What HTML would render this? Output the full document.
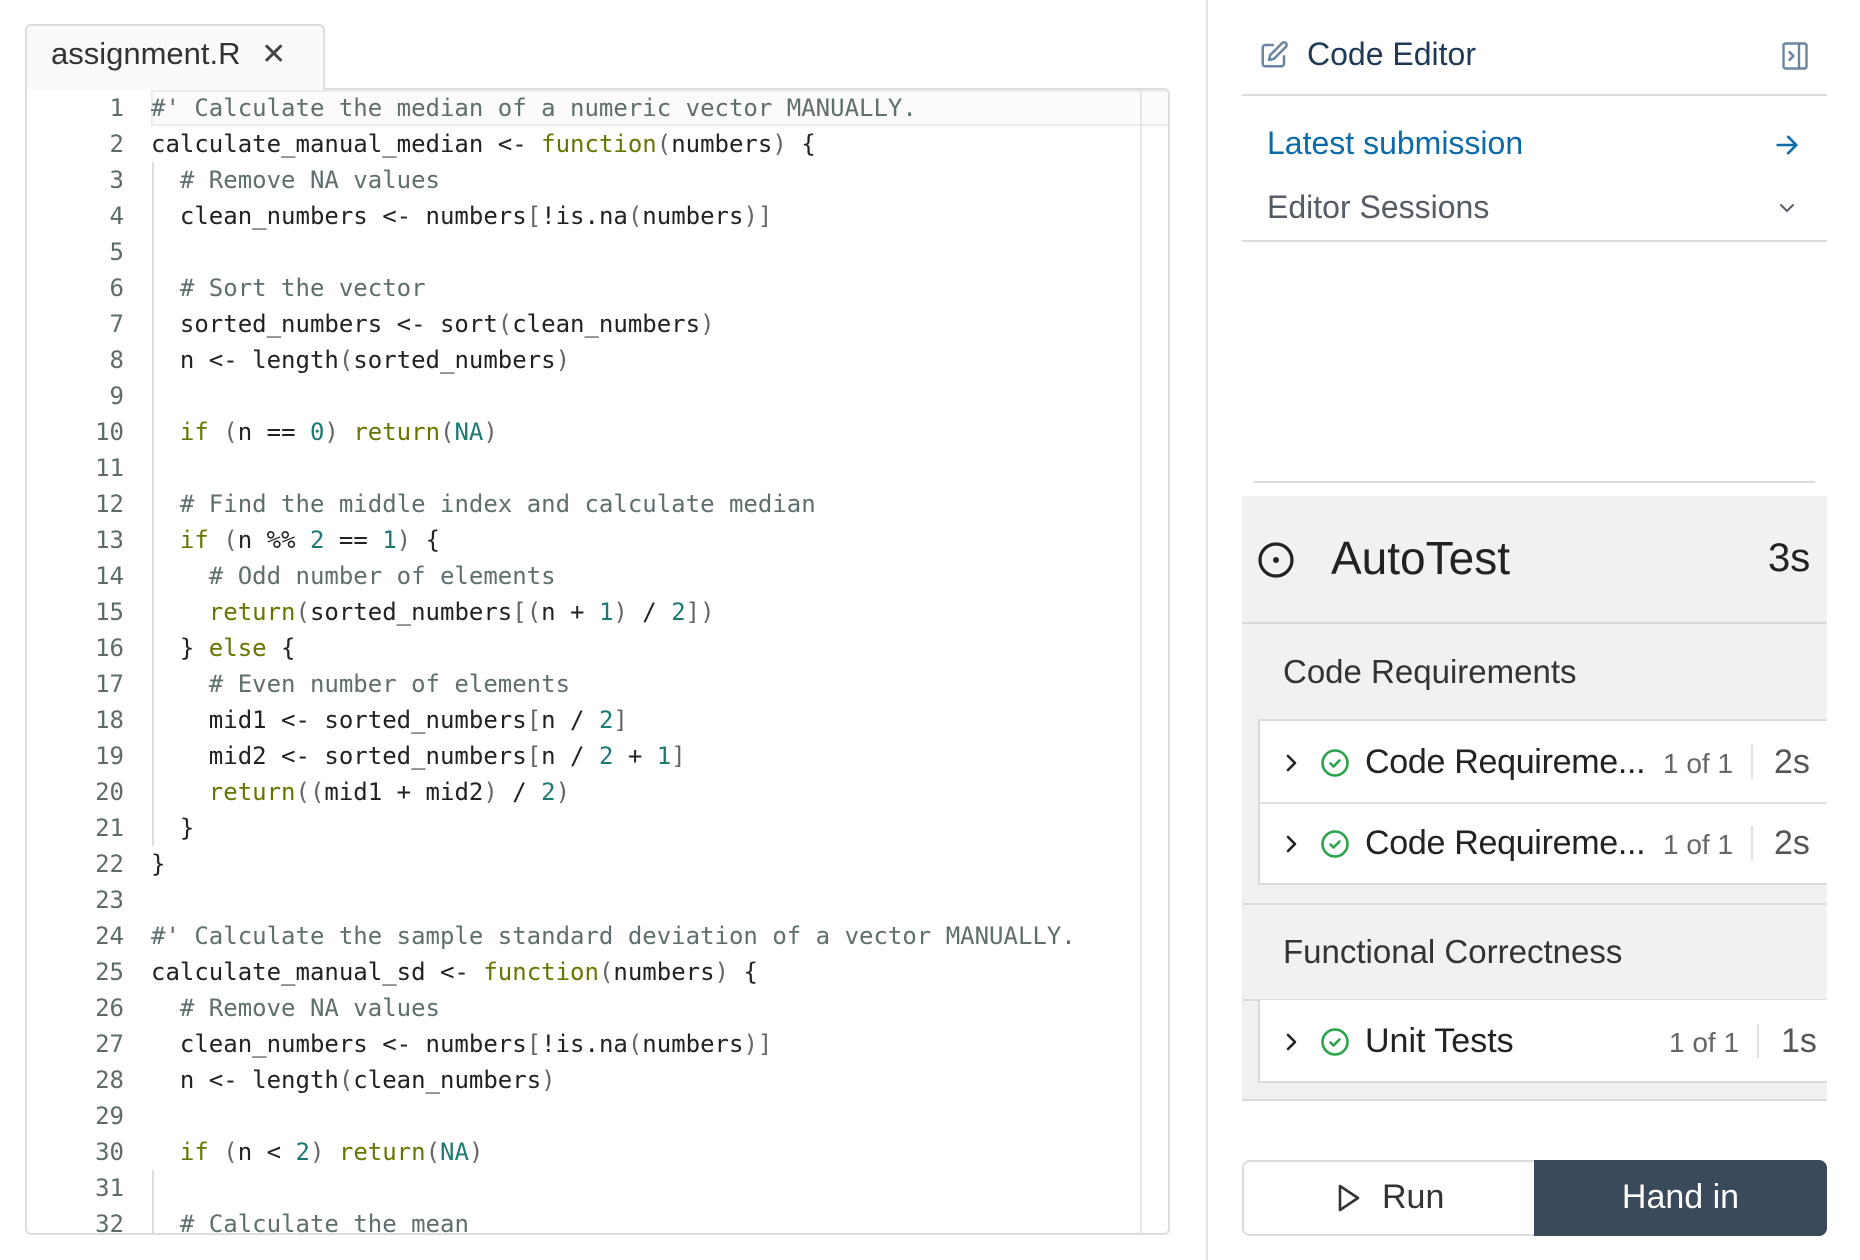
<!DOCTYPE html>
<html><head><meta charset="utf-8"><style>
*{margin:0;padding:0;box-sizing:border-box}
html,body{width:1860px;height:1260px;overflow:hidden}
body{background:#fff;position:relative;font-family:"Liberation Sans",sans-serif}
.abs{position:absolute}
.tab{left:25px;top:24px;width:300px;height:66px;border:2px solid #ddd;border-bottom:none;border-radius:6px 6px 0 0;background:#fafafa;font-size:31px;color:#333;padding:10px 0 0 24px;z-index:2}
.editor{left:25px;top:88px;width:1145px;height:1147px;border:2px solid #ddd;border-radius:0 6px 6px 6px;overflow:hidden;background:#fff}
.code{position:absolute;left:0;top:0;font-family:"DejaVu Sans Mono","Liberation Mono",monospace;font-size:24px;line-height:36px;white-space:pre;color:#222}
.ln{position:absolute;left:0;top:0;width:97px;text-align:right;font-family:"DejaVu Sans Mono","Liberation Mono",monospace;font-size:24px;line-height:36px;color:#5e6b6b;white-space:pre}
.c{color:#5f6e6e}.k{color:#687500}.n{color:#1c7a72}.p{color:#666}
.guide{position:absolute;width:2px;background:#ddd}
.r{font-family:"Liberation Sans",sans-serif}
</style></head><body>
<div class="abs tab">assignment.R <span style="margin-left:12px;font-size:30px;font-weight:300;color:#444">✕</span></div>
<div class="abs editor">
  <div class="abs" style="left:124px;top:0;width:1044px;height:36px;border:2px solid #ececec;background:#fbfbfb"></div>
  <div class="abs" style="left:1113px;top:0;width:2px;height:1145px;background:#e6e6e6"></div>
  <div class="guide" style="left:125px;top:72px;height:684px"></div>
  <div class="guide" style="left:125px;top:1152px;height:-4px"></div>
  <div class="guide" style="left:125px;top:1080px;height:63px"></div>
  <div class="ln">1
2
3
4
5
6
7
8
9
10
11
12
13
14
15
16
17
18
19
20
21
22
23
24
25
26
27
28
29
30
31
32</div>
  <div class="code" style="left:124px"><span class="c">#' Calculate the median of a numeric vector MANUALLY.</span>
calculate_manual_median &lt;- <span class="k">function</span><span class="p">(</span>numbers<span class="p">)</span> {
  <span class="c"># Remove NA values</span>
  clean_numbers &lt;- numbers<span class="p">[</span>!is.na<span class="p">(</span>numbers<span class="p">)]</span>

  <span class="c"># Sort the vector</span>
  sorted_numbers &lt;- sort<span class="p">(</span>clean_numbers<span class="p">)</span>
  n &lt;- length<span class="p">(</span>sorted_numbers<span class="p">)</span>

  <span class="k">if</span> <span class="p">(</span>n == <span class="n">0</span><span class="p">)</span> <span class="k">return</span><span class="p">(</span><span class="n">NA</span><span class="p">)</span>

  <span class="c"># Find the middle index and calculate median</span>
  <span class="k">if</span> <span class="p">(</span>n %% <span class="n">2</span> == <span class="n">1</span><span class="p">)</span> {
    <span class="c"># Odd number of elements</span>
    <span class="k">return</span><span class="p">(</span>sorted_numbers<span class="p">[(</span>n + <span class="n">1</span><span class="p">)</span> / <span class="n">2</span><span class="p">])</span>
  } <span class="k">else</span> {
    <span class="c"># Even number of elements</span>
    mid1 &lt;- sorted_numbers<span class="p">[</span>n / <span class="n">2</span><span class="p">]</span>
    mid2 &lt;- sorted_numbers<span class="p">[</span>n / <span class="n">2</span> + <span class="n">1</span><span class="p">]</span>
    <span class="k">return</span><span class="p">((</span>mid1 + mid2<span class="p">)</span> / <span class="n">2</span><span class="p">)</span>
  }
}

<span class="c">#' Calculate the sample standard deviation of a vector MANUALLY.</span>
calculate_manual_sd &lt;- <span class="k">function</span><span class="p">(</span>numbers<span class="p">)</span> {
  <span class="c"># Remove NA values</span>
  clean_numbers &lt;- numbers<span class="p">[</span>!is.na<span class="p">(</span>numbers<span class="p">)]</span>
  n &lt;- length<span class="p">(</span>clean_numbers<span class="p">)</span>

  <span class="k">if</span> <span class="p">(</span>n &lt; <span class="n">2</span><span class="p">)</span> <span class="k">return</span><span class="p">(</span><span class="n">NA</span><span class="p">)</span>

  <span class="c"># Calculate the mean</span></div>
</div>
<div class="abs" style="left:1206px;top:0;width:2px;height:1260px;background:#e4e4e4"></div>

<svg class="abs" style="left:1259px;top:40px" width="30" height="30" viewBox="0 0 24 24" fill="none" stroke="#6a85a0" stroke-width="2" stroke-linecap="round" stroke-linejoin="round"><path d="M11 4H5a2 2 0 0 0-2 2v13a2 2 0 0 0 2 2h13a2 2 0 0 0 2-2v-6"/><path d="M18.5 2.5a2.1 2.1 0 0 1 3 3L12 15l-4 1 1-4z"/></svg>
<div class="abs r" style="left:1307px;top:36px;font-size:32px;color:#1f3a56">Code Editor</div>
<svg class="abs" style="left:1782px;top:42px" width="26" height="28" viewBox="0 0 26 28" fill="none" stroke="#6a85a0" stroke-width="2.4"><rect x="1.5" y="1.5" width="23" height="25" rx="2"/><path d="M17 2v24"/><path d="M7.5 10l4 4-4 4" stroke-linecap="round" stroke-linejoin="round"/></svg>
<div class="abs" style="left:1242px;top:94px;width:585px;height:2px;background:#dcdcdc"></div>
<div class="abs r" style="left:1267px;top:125px;font-size:32px;color:#0b6aa8">Latest submission</div>
<svg class="abs" style="left:1773px;top:131px" width="28" height="28" viewBox="0 0 24 24" fill="none" stroke="#0b6aa8" stroke-width="2.2" stroke-linecap="round" stroke-linejoin="round"><path d="M4 12h16M13 5l7 7-7 7"/></svg>
<div class="abs r" style="left:1267px;top:189px;font-size:32px;color:#555c64">Editor Sessions</div>
<svg class="abs" style="left:1775px;top:196px" width="24" height="24" viewBox="0 0 24 24" fill="none" stroke="#555c64" stroke-width="2" stroke-linecap="round"><path d="M6 9l6 6 6-6"/></svg>
<div class="abs" style="left:1242px;top:240px;width:585px;height:2px;background:#dcdcdc"></div>
<div class="abs" style="left:1254px;top:481px;width:561px;height:2px;background:#dcdcdc"></div>

<div class="abs" style="left:1242px;top:496px;width:585px;height:605px;background:#f1f1f1;border-bottom:2px solid #dadada"></div>
<svg class="abs" style="left:1257px;top:541px" width="38" height="38" viewBox="0 0 38 38" fill="none" stroke="#222" stroke-width="3.2"><circle cx="19" cy="19" r="16"/><circle cx="19" cy="19" r="3" fill="#222" stroke="none"/></svg>
<div class="abs r" style="left:1331px;top:531px;font-size:46px;color:#222">AutoTest</div>
<div class="abs r" style="left:1768px;top:536px;font-size:40px;color:#222">3s</div>
<div class="abs" style="left:1242px;top:622px;width:585px;height:2px;background:#dadada"></div>
<div class="abs r" style="left:1283px;top:653px;font-size:33px;color:#333">Code Requirements</div>

<div class="abs" style="left:1258px;top:719px;width:569px;height:166px;background:#fff;border:2px solid #dadada;border-right:none"></div>
<div class="abs" style="left:1260px;top:802px;width:567px;height:2px;background:#e0e0e0"></div>
<div class="abs" style="left:1242px;top:903px;width:585px;height:2px;background:#dadada"></div>
<div class="abs r" style="left:1283px;top:933px;font-size:33px;color:#333">Functional Correctness</div>
<div class="abs" style="left:1242px;top:999px;width:585px;height:2px;background:#dadada"></div>
<div class="abs" style="left:1258px;top:1000px;width:569px;height:83px;background:#fff;border:2px solid #dadada;border-top:none;border-right:none"></div>

<svg class="abs" style="left:1282px;top:751px" width="20" height="24" viewBox="0 0 20 24" fill="none" stroke="#222" stroke-width="2.6" stroke-linecap="round" stroke-linejoin="round"><path d="M6 5l7 7-7 7"/></svg>
<svg class="abs" style="left:1320px;top:748px" width="30" height="30" viewBox="0 0 30 30" fill="none" stroke="#2aa44a" stroke-width="2.6" stroke-linecap="round" stroke-linejoin="round"><circle cx="15" cy="15" r="12.5"/><path d="M10.5 15.5l3 3 6-6"/></svg>
<div class="abs r" style="left:1365px;top:743px;font-size:34px;color:#222;letter-spacing:-0.3px">Code Requireme...</div>
<div class="abs r" style="left:1663px;top:748px;font-size:28px;color:#666">1 of 1</div>
<div class="abs" style="left:1751px;top:745px;width:2px;height:34px;background:#e2e2e2"></div>
<div class="abs r" style="left:1774px;top:743px;font-size:34px;color:#555">2s</div>

<svg class="abs" style="left:1282px;top:832px" width="20" height="24" viewBox="0 0 20 24" fill="none" stroke="#222" stroke-width="2.6" stroke-linecap="round" stroke-linejoin="round"><path d="M6 5l7 7-7 7"/></svg>
<svg class="abs" style="left:1320px;top:829px" width="30" height="30" viewBox="0 0 30 30" fill="none" stroke="#2aa44a" stroke-width="2.6" stroke-linecap="round" stroke-linejoin="round"><circle cx="15" cy="15" r="12.5"/><path d="M10.5 15.5l3 3 6-6"/></svg>
<div class="abs r" style="left:1365px;top:824px;font-size:34px;color:#222;letter-spacing:-0.3px">Code Requireme...</div>
<div class="abs r" style="left:1663px;top:829px;font-size:28px;color:#666">1 of 1</div>
<div class="abs" style="left:1751px;top:826px;width:2px;height:34px;background:#e2e2e2"></div>
<div class="abs r" style="left:1774px;top:824px;font-size:34px;color:#555">2s</div>

<svg class="abs" style="left:1282px;top:1030px" width="20" height="24" viewBox="0 0 20 24" fill="none" stroke="#222" stroke-width="2.6" stroke-linecap="round" stroke-linejoin="round"><path d="M6 5l7 7-7 7"/></svg>
<svg class="abs" style="left:1320px;top:1027px" width="30" height="30" viewBox="0 0 30 30" fill="none" stroke="#2aa44a" stroke-width="2.6" stroke-linecap="round" stroke-linejoin="round"><circle cx="15" cy="15" r="12.5"/><path d="M10.5 15.5l3 3 6-6"/></svg>
<div class="abs r" style="left:1365px;top:1022px;font-size:34px;color:#222">Unit Tests</div>
<div class="abs r" style="left:1669px;top:1027px;font-size:28px;color:#666">1 of 1</div>
<div class="abs" style="left:1757px;top:1024px;width:2px;height:34px;background:#e2e2e2"></div>
<div class="abs r" style="left:1781px;top:1022px;font-size:34px;color:#555">1s</div>

<div class="abs" style="left:1242px;top:1160px;width:294px;height:76px;border:2px solid #dcdcdc;border-right:none;border-radius:8px 0 0 8px;background:#fff"></div>
<svg class="abs" style="left:1336px;top:1183px" width="26" height="30" viewBox="0 0 26 30" fill="none" stroke="#333" stroke-width="2.6" stroke-linejoin="round"><path d="M4 3l18 12L4 27z"/></svg>
<div class="abs r" style="left:1382px;top:1178px;font-size:34px;color:#333">Run</div>
<div class="abs" style="left:1534px;top:1160px;width:293px;height:76px;border-radius:0 8px 8px 0;background:#3a4a5a"></div>
<div class="abs r" style="left:1534px;top:1178px;width:293px;text-align:center;font-size:34px;color:#fff">Hand in</div>
</body></html>
